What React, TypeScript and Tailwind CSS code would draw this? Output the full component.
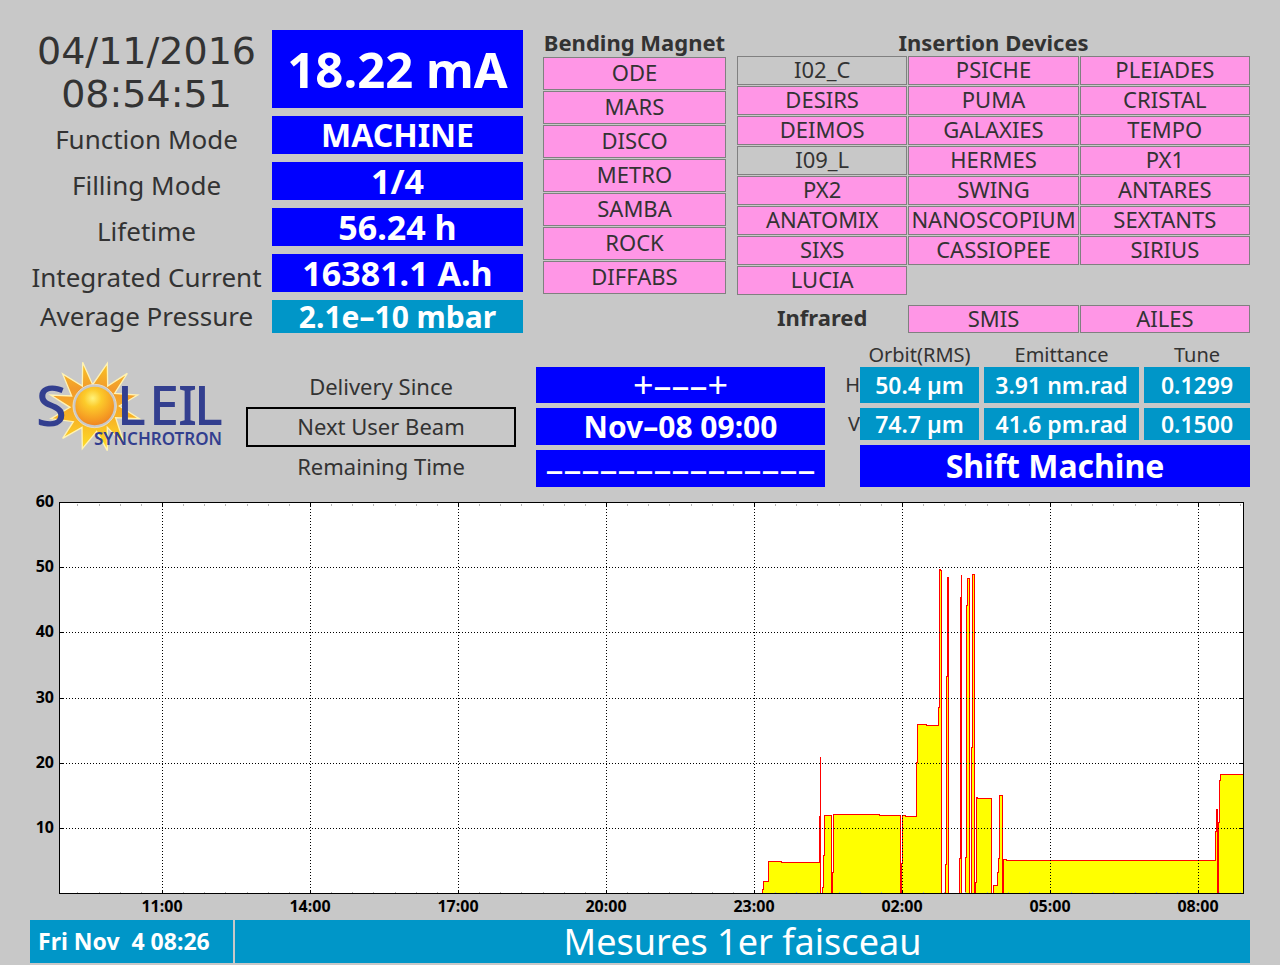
import type { ReactNode } from "react";

type Beamline = { name: string; open: boolean };

const bendingMagnet = ["ODE", "MARS", "DISCO", "METRO", "SAMBA", "ROCK", "DIFFABS"];

const insertionDevices: Beamline[] = [
  { name: "I02_C", open: false },
  { name: "PSICHE", open: true },
  { name: "PLEIADES", open: true },
  { name: "DESIRS", open: true },
  { name: "PUMA", open: true },
  { name: "CRISTAL", open: true },
  { name: "DEIMOS", open: true },
  { name: "GALAXIES", open: true },
  { name: "TEMPO", open: true },
  { name: "I09_L", open: false },
  { name: "HERMES", open: true },
  { name: "PX1", open: true },
  { name: "PX2", open: true },
  { name: "SWING", open: true },
  { name: "ANTARES", open: true },
  { name: "ANATOMIX", open: true },
  { name: "NANOSCOPIUM", open: true },
  { name: "SEXTANTS", open: true },
  { name: "SIXS", open: true },
  { name: "CASSIOPEE", open: true },
  { name: "SIRIUS", open: true },
  { name: "LUCIA", open: true },
];

const modes = [
  { label: "Function Mode", value: "MACHINE", size: "text-[32px]" },
  { label: "Filling Mode", value: "1/4", size: "text-[34px]" },
  { label: "Lifetime", value: "56.24 h", size: "text-[34px]" },
  { label: "Integrated Current", value: "16381.1 A.h", size: "text-[34px]" },
];

const beam = [
  { axis: "H", orbit: "50.4 µm", emittance: "3.91 nm.rad", tune: "0.1299", height: "h-9" },
  { axis: "V", orbit: "74.7 µm", emittance: "41.6 pm.rad", tune: "0.1500", height: "h-[37px] border-t-[5px]" },
];

export default function App() {
  return (
    <main className="flex min-h-screen flex-col bg-[#c8c8c8] px-[30px] pt-[30px] font-['Noto_Sans','DejaVu_Sans',sans-serif] text-[#333333]">
      {/* Machine status and beamlines */}
      <section className="flex">
        <div className="mr-[9px] flex flex-[233] flex-col text-center text-[26px] whitespace-nowrap">
          <div className="font-['DejaVu_Sans',sans-serif] text-[38px] leading-[43px]">
            <p>04/11/2016</p>
            <p>08:54:51</p>
          </div>
          {modes.map((m) => (
            <p key={m.label} className="leading-[46px]">{m.label}</p>
          ))}
          <p className="leading-[33px]">Average Pressure</p>
        </div>

        <div className="mr-5 flex flex-[251] flex-col gap-2 font-bold text-white">
          <Readout className="h-[78px] bg-[#0000ff] text-[49px]">18.22 mA</Readout>
          {modes.map((m) => (
            <Readout key={m.label} className={`h-[38px] bg-[#0000ff] ${m.size}`}>{m.value}</Readout>
          ))}
          <Readout className="h-[33px] bg-[#0096c8] text-[30px]">2.1e–10 mbar</Readout>
        </div>

        <div className="mr-[11px] flex flex-[183] flex-col text-center text-[22px]">
          <h2 className="h-[27px] font-bold leading-[25px] whitespace-nowrap">Bending Magnet</h2>
          <ul className="flex flex-col gap-px">
            {bendingMagnet.map((name) => (
              <li key={name} className="h-[33px] border border-[#808080] bg-[#ff96e6] leading-[29px]">{name}</li>
            ))}
          </ul>
        </div>

        <div className="flex-[513] text-center text-[22px]">
          <h2 className="h-[26px] font-bold leading-[25px]">Insertion Devices</h2>
          <ul className="grid grid-cols-3 gap-px">
            {insertionDevices.map((d) => (
              <li
                key={d.name}
                className={`h-[29px] border border-[#808080] leading-[25px] ${d.open ? "bg-[#ff96e6]" : "bg-[#c8c8c8]"}`}
              >
                {d.name}
              </li>
            ))}
          </ul>
          <div className="mt-[10px] grid grid-cols-3 gap-px leading-[25px]">
            <h2 className="font-bold">Infrared</h2>
            <p className="h-7 border border-[#808080] bg-[#ff96e6]">SMIS</p>
            <p className="h-7 border border-[#808080] bg-[#ff96e6]">AILES</p>
          </div>
        </div>
      </section>

      {/* Delivery and beam quality */}
      <section className="mt-[10px] flex">
        <div className="flex-[216]">
          <Logo />
        </div>

        <div className="mr-5 flex-[270] pt-6 text-center text-[22px]">
          <p className="h-10 leading-[38px]">Delivery Since</p>
          <p className="h-10 border-2 border-black leading-[34px]">Next User Beam</p>
          <p className="h-10 leading-[38px]">Remaining Time</p>
        </div>

        <div className="mr-[19px] flex flex-[289] flex-col gap-[5px] pt-6 text-white">
          <Readout className="h-9 bg-[#0000ff] text-[36px]">+–––+</Readout>
          <Readout className="h-[37px] bg-[#0000ff] text-[30px] font-bold">Nov–08 09:00</Readout>
          <Readout className="h-[37px] bg-[#0000ff] text-[36px]">–––––––––––––––</Readout>
        </div>

        <div className="flex-[406]">
          <table className="w-full table-fixed border-separate border-spacing-0 text-center whitespace-nowrap">
            <colgroup>
              <col className="w-4" />
              <col className="w-[119px]" />
              <col className="w-[160px]" />
              <col className="w-[111px]" />
            </colgroup>
            <thead>
              <tr className="h-6 text-[20px] leading-6">
                <td />
                <th className="font-normal">Orbit(RMS)</th>
                <th className="border-l-[5px] border-[#c8c8c8] font-normal">Emittance</th>
                <th className="border-l-[5px] border-[#c8c8c8] font-normal">Tune</th>
              </tr>
            </thead>
            <tbody>
              {beam.map((b) => (
                <tr key={b.axis} className="text-[23px] leading-8 font-semibold text-white">
                  <th className={`border-[#c8c8c8] text-right text-[20px] font-normal text-[#333333] ${b.height}`}>{b.axis}</th>
                  <td className={`border-[#c8c8c8] bg-[#0096c8] ${b.height}`}>{b.orbit}</td>
                  <td className={`border-l-[5px] border-[#c8c8c8] bg-[#0096c8] ${b.height}`}>{b.emittance}</td>
                  <td className={`border-l-[5px] border-[#c8c8c8] bg-[#0096c8] ${b.height}`}>{b.tune}</td>
                </tr>
              ))}
            </tbody>
          </table>
          <div className="mt-[5px] pl-4 font-bold text-white">
            <Readout className="h-[42px] bg-[#0000ff] text-[32px]">Shift Machine</Readout>
          </div>
        </div>
      </section>

      <CurrentChart />

      {/* Operator message */}
      <footer className="grid h-[43px] grid-cols-[203fr_1015fr] gap-[2px] leading-[43px] text-white">
        <p className="bg-[#0096c8] pl-2 text-[23px] font-bold whitespace-pre">Fri Nov  4 08:26</p>
        <p className="bg-[#0096c8] text-center text-[36px]">Mesures 1er faisceau</p>
      </footer>
    </main>
  );
}

function Readout({ className, children }: { className: string; children: ReactNode }) {
  return (
    <div className={`flex items-center justify-center leading-none whitespace-nowrap ${className}`}>{children}</div>
  );
}

// ---- Stored current over the last 24 hours ----
const levels = [
  { label: "60", y: 502 },
  { label: "50", y: 567 },
  { label: "40", y: 632 },
  { label: "30", y: 698 },
  { label: "20", y: 763 },
  { label: "10", y: 828 },
];

const hours = ["11:00", "14:00", "17:00", "20:00", "23:00", "02:00", "05:00", "08:00"].map((label, i) => ({
  label,
  x: 162 + i * 148,
}));

// six small ticks between two hour marks
const minorTicks = Array.from({ length: 56 }, (_, i) => i - 4)
  .filter((i) => i % 7 !== 0)
  .map((i) => Math.round(162 + (i * 148) / 7));

const trace =
  "762,893 762,889 763,889 763,881 768,881 768,861 781,861 781,862 819,862 819,816 820,816 820,756 820,893 " +
  "822,893 822,887 823,887 823,855 824,855 824,815 831,815 831,893 832,893 832,872 833,872 833,814 879,814 " +
  "879,815 900,815 900,893 901,893 901,863 902,863 902,815 905,815 905,816 916,816 916,762 917,762 917,724 " +
  "926,724 926,725 938,725 938,707 939,707 939,569 940,569 940,570 941,570 941,893 945,893 945,864 946,864 " +
  "946,676 947,676 947,577 948,577 948,893 959,893 959,858 960,858 960,597 961,597 961,574 961,893 965,893 " +
  "965,857 966,857 966,605 967,605 967,578 969,578 969,893 971,893 971,747 972,747 972,574 974,574 974,893 " +
  "975,893 975,882 976,882 976,797 977,797 977,798 991,798 991,893 993,893 993,885 997,885 997,872 998,872 " +
  "998,858 999,858 999,795 1002,795 1002,893 1003,893 1003,859 1006,859 1006,860 1215,860 1215,831 1216,831 " +
  "1216,809 1217,809 1217,893 1218,893 1218,822 1219,822 1219,780 1220,780 1220,774 1243,774 1243,893";

function CurrentChart() {
  return (
    <svg viewBox="30 487 1220 433" className="block h-auto w-full" role="img" aria-label="Stored current">
      <g transform="translate(0.5 0.5)" shapeRendering="crispEdges">
        <rect x="59" y="502" width="1184" height="391" fill="#ffffff" />
        <polyline points={trace} fill="#ffff00" stroke="#ff0000" />
        {minorTicks.map((x) => (
          <path key={x} d={`M${x} 503v2M${x} 891v2`} stroke="#b4b4b4" />
        ))}
        {levels.slice(1).map((l) => (
          <g key={l.label} stroke="#000000">
            <path d={`M59 ${l.y}H1243`} strokeDasharray="1 2" />
            <path d={`M59 ${l.y}h4M1239 ${l.y}h4`} />
          </g>
        ))}
        {hours.map((h) => (
          <g key={h.label} stroke="#000000">
            <path d={`M${h.x} 502V893`} strokeDasharray="1 2" />
            <path d={`M${h.x} 502v4M${h.x} 889v4`} />
          </g>
        ))}
        <rect x="59" y="502" width="1184" height="391" fill="none" stroke="#000000" />
      </g>
      <g fill="#000000" className="text-[16px] font-bold">
        {levels.map((l) => (
          <text key={l.label} x="54" y={l.y + 5} textAnchor="end">{l.label}</text>
        ))}
        {hours.map((h) => (
          <text key={h.label} x={h.x} y="912" textAnchor="middle">{h.label}</text>
        ))}
      </g>
    </svg>
  );
}

function Logo() {
  return (
    <svg viewBox="30 343 216 144" className="block h-auto w-full" role="img" aria-label="Soleil Synchrotron">
      <defs>
        <linearGradient id="rays" x1="0" y1="0" x2="0" y2="1">
          <stop offset="0" stopColor="#f9c623" />
          <stop offset="0.3" stopColor="#f29a2b" />
          <stop offset="0.65" stopColor="#f8b524" />
          <stop offset="1" stopColor="#fde02a" />
        </linearGradient>
        <radialGradient id="disc" cx="0.45" cy="0.3" r="0.75">
          <stop offset="0" stopColor="#fff27a" />
          <stop offset="0.3" stopColor="#fccb2b" />
          <stop offset="0.7" stopColor="#f6a023" />
          <stop offset="1" stopColor="#ee7f22" />
        </radialGradient>
      </defs>
      <g transform="translate(20 350) scale(0.3333)">
        <polygon
          points="188,37 218,104 262,40 263,108 322,70 284,130 353,135 298,168 358,206 287,203 314,286 262,232 262,302 230,244 187,296 186,232 128,265 160,215 93,206 150,172 92,135 155,138 128,72 187,108"
          fill="url(#rays)"
          stroke="#fff3b4"
          strokeWidth="4"
        />
        <circle cx="224" cy="168" r="65" fill="#c8c8c8" stroke="#e6dcc4" strokeWidth="3" />
        <circle cx="224" cy="168" r="58" fill="url(#disc)" />
      </g>
      <g fill="#333f8f" className="font-medium">
        <text x="36" y="426" fontSize="56">S</text>
        <text x="117 149 178 194" y="425" fontSize="54">LEIL</text>
        <text x="94" y="445" fontSize="17" className="font-semibold">SYNCHROTRON</text>
      </g>
    </svg>
  );
}
